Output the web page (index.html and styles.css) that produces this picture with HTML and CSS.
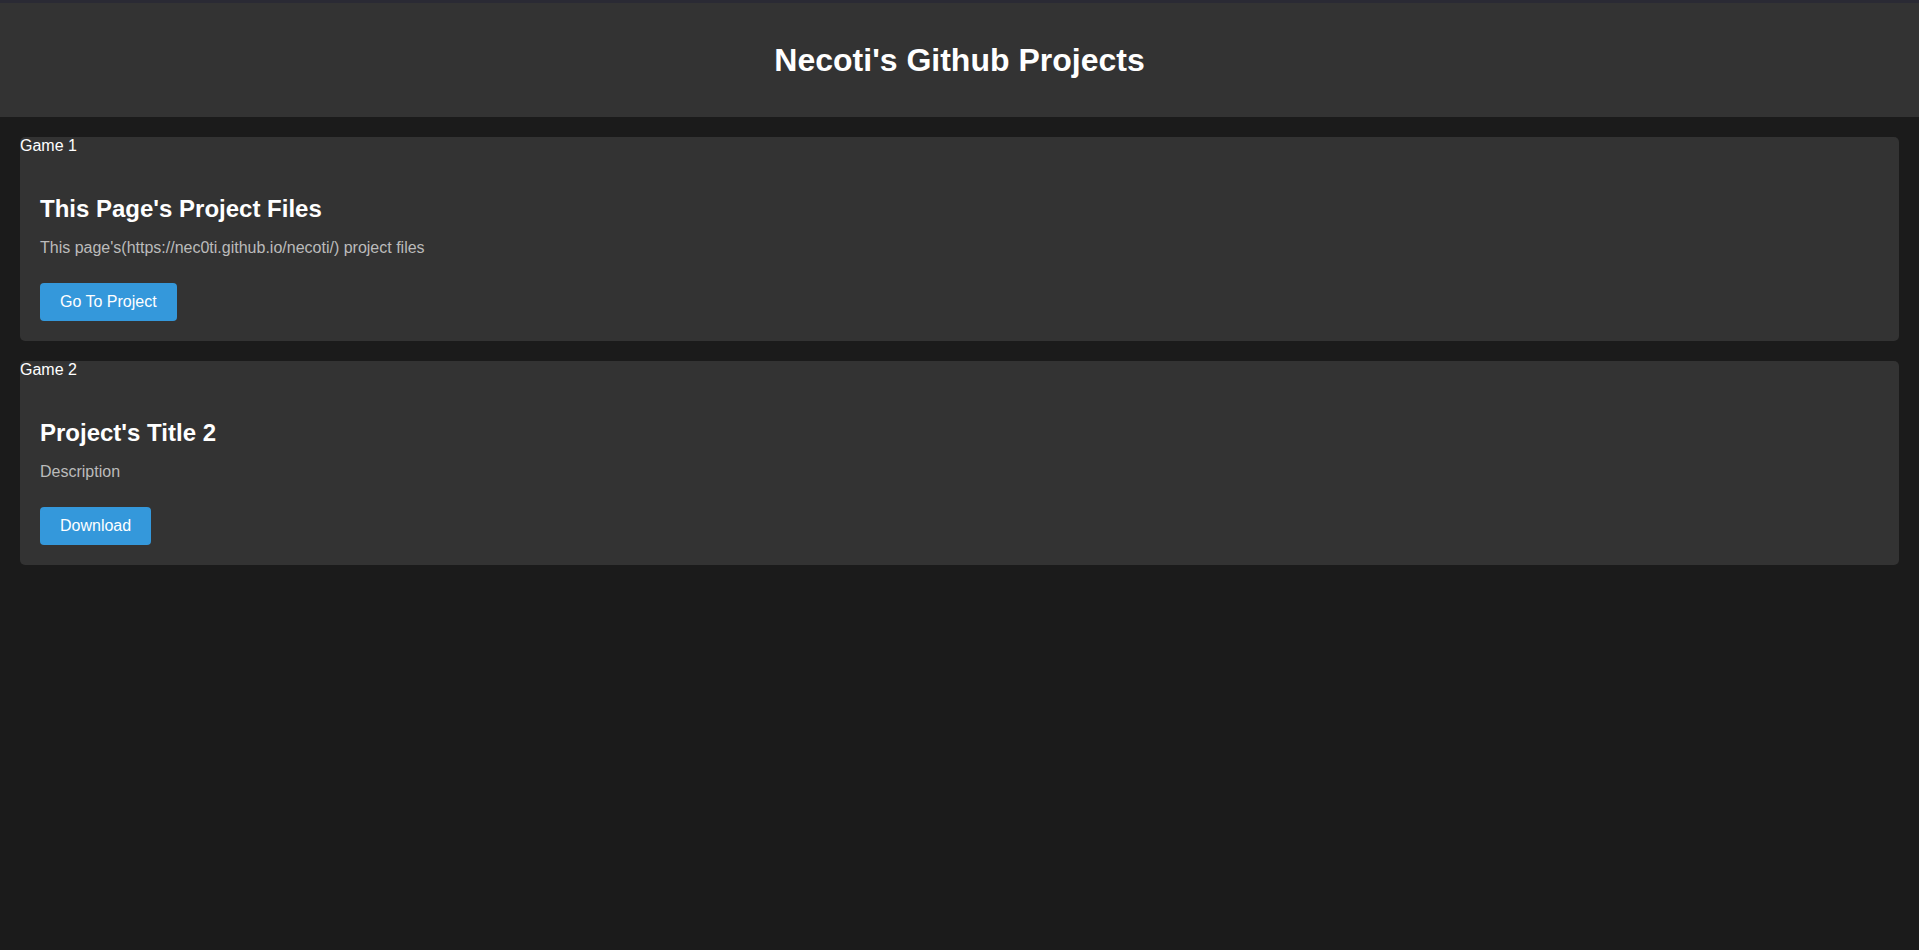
FILE: index.html
```html
<!DOCTYPE html>
<html lang="en">
<head>
<meta charset="UTF-8">
<title>Necoti's Github Projects</title>
<link rel="stylesheet" href="styles.css">
</head>
<body>
<header class="site-header">
  <h1 class="site-title">Necoti's Github Projects</h1>
</header>
<main class="projects">
  <section class="project">
    <div class="project-label">Game 1</div>
    <div class="project-body">
      <h2 class="project-title">This Page's Project Files</h2>
      <p class="project-desc">This page's(https://nec0ti.github.io/necoti/) project files</p>
      <a class="project-btn" href="#">Go To Project</a>
    </div>
  </section>
  <section class="project">
    <div class="project-label">Game 2</div>
    <div class="project-body">
      <h2 class="project-title">Project's Title 2</h2>
      <p class="project-desc">Description</p>
      <a class="project-btn" href="#">Download</a>
    </div>
  </section>
</main>
</body>
</html>
```
FILE: styles.css
```css
html, body {
  margin: 0;
  padding: 0;
}

body {
  background: #1b1b1b;
  color: #ffffff;
  font-family: "Liberation Sans", Arial, sans-serif;
  font-size: 16px;
}

.site-header {
  background: #333333;
  border-top: 3px solid #2a2a34;
  padding: 39px 0 38px;
  text-align: center;
}

.site-title {
  margin: 0;
  font-size: 32px;
  font-weight: bold;
  color: #ffffff;
}

.projects {
  display: flex;
  flex-direction: column;
  gap: 20px;
  padding: 20px;
}

.project {
  background: #333333;
  border-radius: 5px;
}

.project-label {
  color: #ffffff;
}

.project-body {
  padding: 20px;
}

.project-title {
  font-size: 24px;
  font-weight: bold;
  margin: 20px 0 10px;
  color: #ffffff;
}

.project-desc {
  color: #bbbbbb;
  margin: 16px 0;
}

.project-btn {
  display: inline-block;
  margin-top: 10px;
  padding: 10px 20px;
  background: #3498db;
  color: #ffffff;
  text-decoration: none;
  border-radius: 4px;
}
```
